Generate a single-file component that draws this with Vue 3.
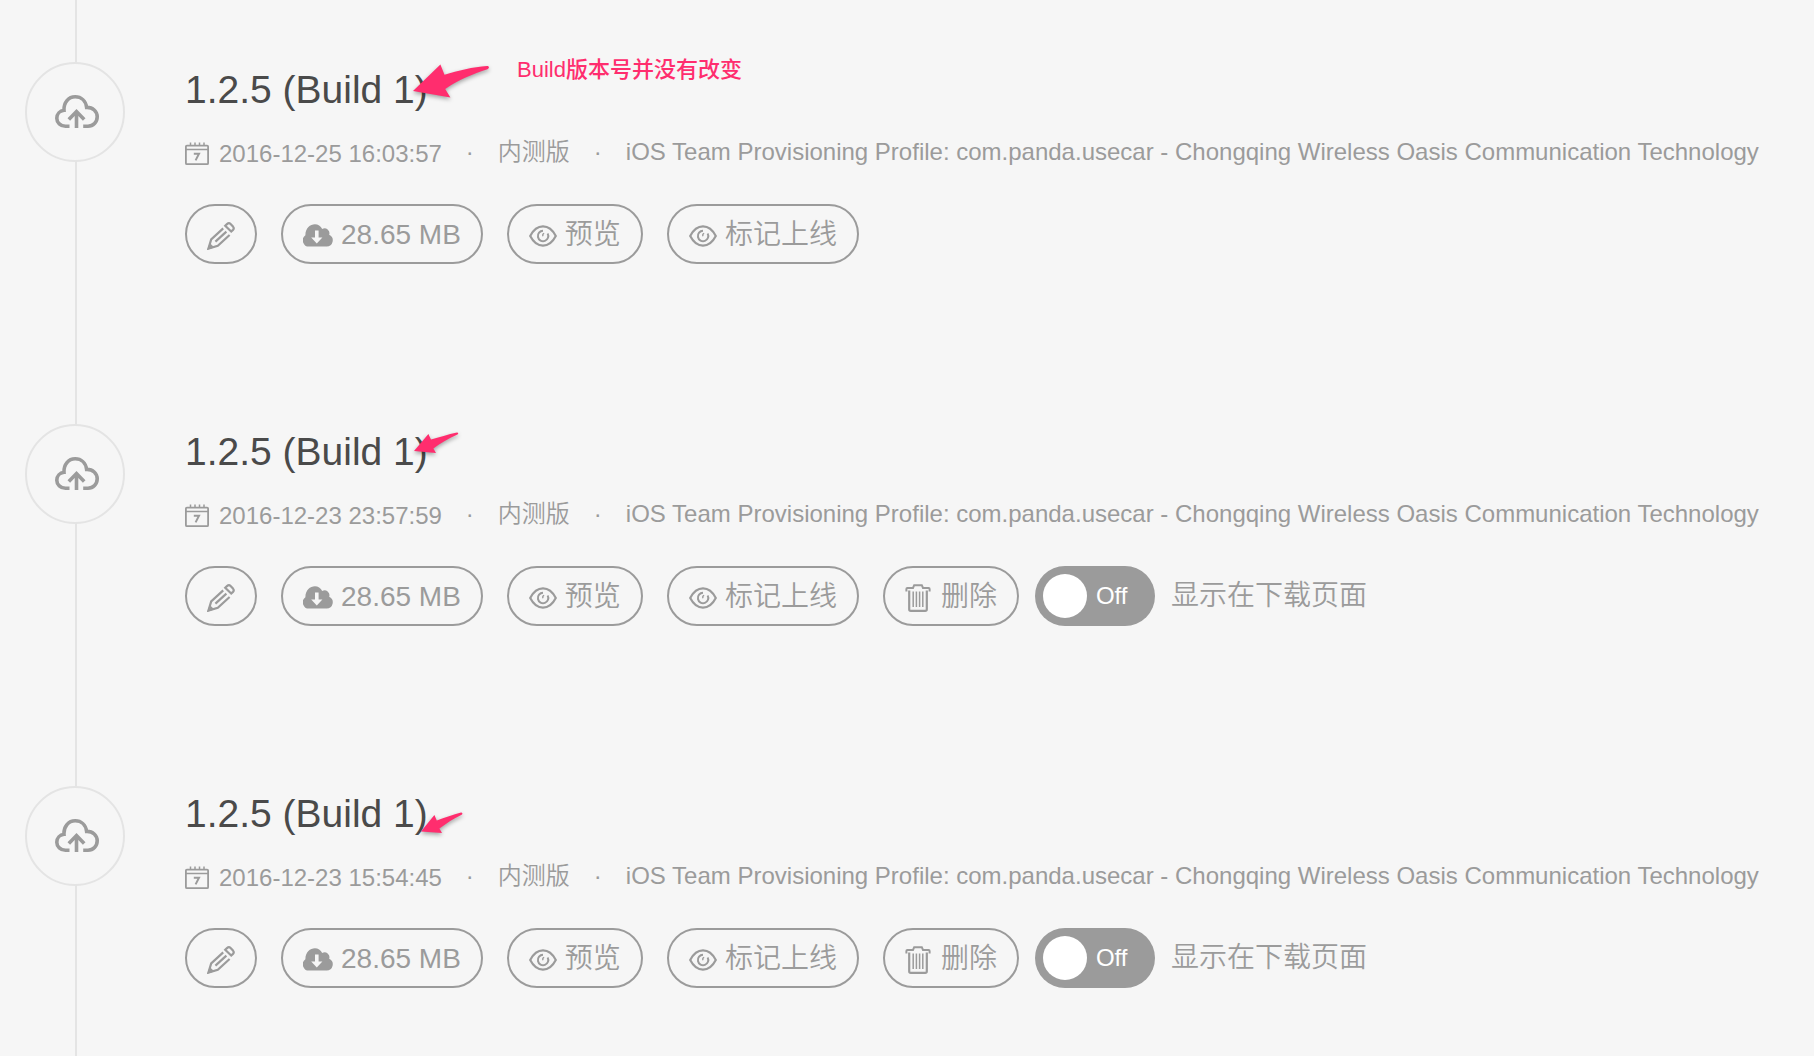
<template>
  <main class="timeline">
    <article v-for="build in builds" :key="build.id" class="build">
      <div class="build-marker">
        <svg width="44" height="34" viewBox="0 0 44 34" fill="none" stroke="currentColor" stroke-width="3.6">
          <path d="M14.5 31.2H10.5C5.5 31.2 1.8 27.6 1.8 23.2C1.8 19 4.8 15.8 9 15.3C8.6 7.5 13.5 1.8 20.2 1.8C26.3 1.8 30.8 6 31.6 12.4C37.8 12.2 42.2 16.4 42.2 21.8C42.2 27.2 38.2 31.2 33 31.2H28.2" />
          <path d="M21.5 33V16.5M13.8 24.6L21.5 16.6L29.2 24.6" />
        </svg>
      </div>

      <div class="build-body">
        <h2 class="build-title">
          {{ build.version }} (Build {{ build.number }})
          <svg v-if="build.arrow === 'large'" class="arrow arrow-large" width="78" height="36" viewBox="0 0 78 36">
            <path d="M0 27L27.4 0.4L31.5 10.8C45 6.5 60 3 74 2C76.5 2 76.5 4.2 74.5 5.2C60 10 45 16 32.2 25L37.4 33.6Z" />
          </svg>
          <svg v-else class="arrow" :class="'arrow-' + build.arrow" width="46" height="24" viewBox="0 0 46 24">
            <path v-if="build.arrow === 'small'" d="M0 19L14.4 2L17 7.6C25 5 34 2.4 43 0.4C44.6 0.4 44.6 2 43.4 2.6C34 7 26 11.4 19.4 16.4L22 21Z" />
            <path v-else d="M0 19.4L13.4 3L15.8 8.4C24 5.4 32 2.4 40 0.4C41.8 0.4 41.8 2 40.6 2.8C32 7 25 11.6 18.4 16.6L21 21Z" />
          </svg>
          <span v-if="build.note" class="note">{{ build.note }}</span>
        </h2>

        <div class="build-meta">
          <time class="build-date">
            <svg width="24" height="24" viewBox="0 0 24 24" fill="none" stroke="currentColor" stroke-width="1.8">
              <rect x="0.9" y="3.6" width="22.2" height="18.6" rx="1" />
              <path d="M1 7.6H23M5.5 0.6V4M10 0.6V4M14.5 0.6V4M19 0.6V4" stroke-width="1.5" />
              <path d="M8.8 11.8H14L10.6 18.4" stroke-width="2" />
            </svg>
            {{ build.date }}
          </time>
          <span class="dot">·</span>
          <span>内测版</span>
          <span class="dot">·</span>
          <span>{{ profile }}</span>
        </div>

        <div class="build-actions">
          <button class="btn" type="button" aria-label="编辑">
            <svg width="28" height="28" viewBox="0 0 28 28" fill="none" stroke="currentColor" stroke-width="2.2">
              <path d="M16.2 6.4L4.2 17.4L1.4 26.6L10.8 23.8L22.6 13" />
              <path d="M18.2 3.8L20 2.1C21.2 1 22.6 1 23.6 2L26 4.6C27 5.8 26.9 7 26 7.9L24.2 9.6Z" />
              <path d="M19.4 9.6L8.4 19.6" />
              <path d="M2.8 21L7.4 25.4L0.2 27.8Z" fill="currentColor" stroke="none" />
            </svg>
          </button>
          <button class="btn" type="button">
            <svg width="30" height="24" viewBox="0 0 30 24">
              <path fill="currentColor" fill-rule="evenodd" d="M6.5 22.6A6.3 6.3 0 0 1 2.4 11.2C2.2 -0.6 15.6 -3.4 19.2 5A4.9 4.9 0 0 1 26.2 10.8A6.2 6.2 0 0 1 23.6 22.6ZM12 6.6V13.6H8.2L13.8 19.4L19.4 13.6H15.6V6.6Z" />
            </svg>
            {{ build.size }}
          </button>
          <button v-for="label in ['预览', '标记上线']" :key="label" class="btn" type="button">
            <svg width="28" height="22" viewBox="0 0 28 22" fill="none" stroke="currentColor" stroke-width="2.2">
              <path d="M1.2 11C4.5 4.6 9 1.4 14 1.4S23.5 4.6 26.8 11C23.5 17.4 19 20.6 14 20.6S4.5 17.4 1.2 11Z" />
              <path d="M14 5.8A5.2 5.2 0 1 0 18.6 8.4" stroke-width="2" />
              <path d="M15.2 8.4C13.8 8.8 13.4 10 14 11.2" stroke-width="1.4" />
            </svg>
            {{ label }}
          </button>
          <template v-if="build.removable">
            <button class="btn" type="button">
              <svg width="28" height="28" viewBox="0 0 28 28" fill="none" stroke="currentColor" stroke-width="2">
                <path d="M1.4 7.4V5C1.4 4.4 1.8 4 2.4 4H8L9.2 1.2H16.8L18 4H23.6C24.2 4 24.6 4.4 24.6 5V7.4" />
                <path d="M4.2 6.4V25.2C4.2 26.3 4.8 26.8 5.8 26.8H20.2C21.2 26.8 21.8 26.3 21.8 25.2V6.4" stroke-width="2.2" />
                <path d="M8.2 7.4V23M11.4 7.4V23M14.6 7.4V23M17.8 7.4V23" stroke-width="1.5" />
              </svg>
              删除
            </button>
            <label class="switch">
              <span class="switch-track">
                <input v-model="build.visible" class="switch-input" type="checkbox" role="switch">
                <span class="switch-state">{{ build.visible ? 'On' : 'Off' }}</span>
              </span>
              显示在下载页面
            </label>
          </template>
        </div>
      </div>
    </article>
  </main>
</template>

<script setup>
import { reactive } from 'vue'

const profile = 'iOS Team Provisioning Profile: com.panda.usecar - Chongqing Wireless Oasis Communication Technology'

const builds = reactive([
  {
    id: 3,
    version: '1.2.5',
    number: 1,
    date: '2016-12-25 16:03:57',
    size: '28.65 MB',
    removable: false,
    visible: true,
    arrow: 'large',
    note: 'Build版本号并没有改变'
  },
  {
    id: 2,
    version: '1.2.5',
    number: 1,
    date: '2016-12-23 23:57:59',
    size: '28.65 MB',
    removable: true,
    visible: false,
    arrow: 'small'
  },
  {
    id: 1,
    version: '1.2.5',
    number: 1,
    date: '2016-12-23 15:54:45',
    size: '28.65 MB',
    removable: true,
    visible: false,
    arrow: 'low'
  }
])
</script>

<style>
body {
  margin: 0;
  background: #f6f6f6;
}
</style>

<style scoped>
.timeline {
  position: relative;
  display: flex;
  flex-direction: column;
  gap: 160px;
  box-sizing: border-box;
  min-height: 100vh;
  padding: 62px 24px 60px 25px;
  color: #9b9b9b;
  font-family: "Liberation Sans", "Noto Sans CJK SC", sans-serif;
  font-weight: 350;
}

.timeline::before {
  content: "";
  position: absolute;
  top: 0;
  bottom: 0;
  left: 75px;
  width: 2px;
  background: #e4e4e4;
}

.build {
  position: relative;
  display: flex;
  align-items: flex-start;
  gap: 60px;
}

.build-marker {
  display: flex;
  align-items: center;
  justify-content: center;
  flex: none;
  box-sizing: border-box;
  width: 100px;
  height: 100px;
  padding-left: 4px;
  border: 2px solid #e4e4e4;
  border-radius: 50%;
  background: #f6f6f6;
}

.build-body {
  flex: 1;
  min-width: 0;
  padding-top: 4px;
}

.build-title {
  position: relative;
  margin: 0;
  color: #4a4a4a;
  font-size: 39px;
  font-weight: 400;
  line-height: 48px;
}

.arrow {
  position: absolute;
  overflow: visible;
  fill: #ff2d6e;
  filter: drop-shadow(0 2px 2px rgba(0, 0, 0, 0.35));
}

.arrow-large {
  top: -2px;
  left: 228px;
}

.arrow-small {
  top: 4px;
  left: 229px;
}

.arrow-low {
  top: 22px;
  left: 236px;
}

.note {
  position: absolute;
  top: -10px;
  left: 332px;
  color: #ff2d6e;
  font-size: 22px;
  font-weight: 500;
  line-height: 28px;
  white-space: nowrap;
}

.build-meta {
  display: flex;
  margin-top: 22px;
  font-size: 24px;
  line-height: 32px;
  white-space: nowrap;
}

.build-date {
  display: flex;
  align-items: center;
  gap: 10px;
  padding-top: 2px;
}

.dot {
  width: 56px;
  text-align: center;
}

.build-actions {
  display: flex;
  flex-wrap: wrap;
  gap: 24px;
  margin-top: 34px;
}

.btn {
  display: flex;
  align-items: center;
  gap: 8px;
  box-sizing: border-box;
  height: 60px;
  padding: 2px 20px 0;
  border: 2px solid #9b9b9b;
  border-radius: 30px;
  background: transparent;
  color: inherit;
  font: inherit;
  font-size: 28px;
  line-height: 40px;
  white-space: nowrap;
  cursor: pointer;
}

.btn svg {
  flex: none;
  margin-top: 2px;
}

.switch {
  display: flex;
  align-items: center;
  gap: 16px;
  margin-left: -8px;
  font-size: 28px;
  line-height: 40px;
  cursor: pointer;
}

.switch-track {
  position: relative;
  display: flex;
}

.switch-input {
  appearance: none;
  width: 120px;
  height: 60px;
  margin: 0;
  border-radius: 30px;
  background: #9b9b9b;
  cursor: pointer;
}

.switch-input::before {
  content: "";
  position: absolute;
  top: 8px;
  left: 8px;
  width: 44px;
  height: 44px;
  border-radius: 50%;
  background: #fff;
}

.switch-input:checked::before {
  left: 68px;
}

.switch-state {
  position: absolute;
  top: 10px;
  left: 61px;
  color: #fff;
  font-size: 24px;
}

.switch-input:checked + .switch-state {
  left: 24px;
}
</style>
